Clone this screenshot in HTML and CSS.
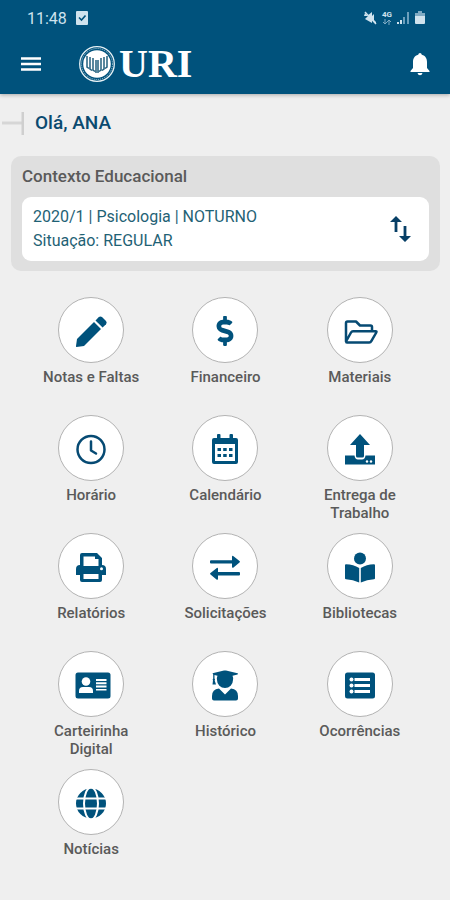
FILE: index.html
```html
<!DOCTYPE html>
<html lang="pt-BR">
<head>
  <meta charset="UTF-8">
  <meta name="viewport" content="width=device-width, initial-scale=1.0">
  <title>URI</title>
  <link rel="stylesheet" href="styles.css">
</head>
<body>
<header class="header">
  <div class="status-bar">
    <span class="clock">11:48</span>
    <svg class="status-check" width="12" height="14" viewBox="0 0 12 14"><rect width="12" height="14" rx="1" fill="#cfe3ee"/><path d="M3 6.500l2.500 2.500 4-4.500" fill="none" stroke="#00527c" stroke-width="1.600"/></svg>
    <div class="status-icons">
      <svg width="13" height="14" viewBox="0 0 13 14"><path d="M0 5h3l5-4v4l2-2v6l2 2v2L1 2z" fill="#cfe3ee"/><path d="M1 8l7 4V8L4 5z" fill="#cfe3ee"/><path d="M1 1l11 12" stroke="#cfe3ee" stroke-width="1.500"/></svg>
      <div class="network">
        <span>4G</span>
        <svg width="10" height="6" viewBox="0 0 10 6"><path d="M3 0v5M1 3l2 2 2-2M7 6V1M5 3l2-2 2 2" fill="none" stroke="#7fabc4"/></svg>
      </div>
      <svg width="13" height="14" viewBox="0 0 13 14"><path d="M0 11h2v2H0zM3 9h2v4H3z" fill="#cfe3ee"/><path d="M6 6h2v7H6zM10 1h2v12h-2z" fill="#6c9fbc"/></svg>
      <svg width="10" height="14" viewBox="0 0 10 14"><path d="M3 0h4v2h3v3H0V2h3z" fill="#7fabc4"/><path d="M0 5h10v7q0 1-1 1H1q-1 0-1-1z" fill="#cfe3ee"/></svg>
    </div>
  </div>
  <div class="navbar">
    <button class="nav-button" aria-label="Menu">
      <svg width="20" height="14" viewBox="0 0 20 14"><path d="M0 1.500h20M0 7h20M0 12.500h20" stroke="#fff" stroke-width="2.400"/></svg>
    </button>
    <a class="logo" href="#">
      <svg width="36" height="36" viewBox="0 0 36 36">
        <circle cx="18" cy="18" r="17.300" fill="#00527c" stroke="#e6f1f5" stroke-width="1.300"/>
        <circle cx="18" cy="18" r="15.500" fill="none" stroke="#b5d0dc" stroke-width="1" stroke-dasharray="1 1"/>
        <circle cx="18" cy="18" r="13.800" fill="#fff"/>
        <path d="M8 10v11l2 1.500M11 11v12l2 1.500M14 12v12l2 1.500M17 14v13M19 14v13M22 12v12l-2 1.500M25 11v12l-2 1.500M28 10v11l-2 1.500" fill="none" stroke="#22607e" stroke-width="1.500"/>
      </svg>
      <span>URI</span>
    </a>
    <button class="nav-button bell" aria-label="Notificações">
      <svg width="20" height="24" viewBox="0 0 20 24"><path d="M10 1q1.500 0 1.800 1.700C15.500 3.800 17 6.500 17 10v6l2.500 3v1H.5v-1L3 16v-6c0-3.500 1.500-6.200 5.200-7.300Q8.500 1 10 1z" fill="#fff"/><path d="M7.500 21h5q-.5 2.300-2.500 2.300T7.500 21z" fill="#fff"/></svg>
    </button>
  </div>
</header>
<main class="main">
  <div class="greeting">
    <svg width="24" height="24" viewBox="0 0 24 24"><path d="M2 12h21" stroke="#d6d6d6" stroke-width="3"/><path d="M23 1v23" stroke="#cfcfcf" stroke-width="3"/></svg>
    <h1>Olá, ANA</h1>
  </div>
  <section class="context">
    <h2>Contexto Educacional</h2>
    <div class="context-card">
      <p>2020/1 | Psicologia | NOTURNO<br>Situação: REGULAR</p>
      <button class="swap-button" aria-label="Trocar contexto">
        <svg width="22" height="28" viewBox="0 0 22 28"><path d="M7 17V5M16 11v12" stroke="#073f66" stroke-width="2.800"/><path d="M1 7l6-6 6 6zM10 21l6 6 6-6z" fill="#073f66"/></svg>
      </button>
    </div>
  </section>
  <nav class="menu">
    <a class="menu-item" href="#">
      <span class="circle"><svg viewBox="0 0 36 36"><path d="M4 27L21 10l7 7-17 17-7.500 1q-.7 0-.5-1z"/><path d="M22.500 8.500l3.300-3.400q1.600-1.400 3.200 0l4 4q1.400 1.600 0 3.200l-3.400 3.300z"/></svg></span>
      <span>Notas e Faltas</span>
    </a>
    <a class="menu-item" href="#">
      <span class="circle"><svg viewBox="-163 -68 614 614"><path d="M209.200 233.400l-108-31.600C88.700 198.200 80 186.500 80 173.500c0-16.300 13.200-29.500 29.500-29.500h66.300c12.200 0 24.200 3.700 34.200 10.500 6.100 4.100 14.300 3.100 19.500-2l34.800-34c7.100-6.900 6.100-18.400-1.800-24.500C238 74.800 207.400 64.100 176 64V16c0-8.800-7.200-16-16-16h-32c-8.800 0-16 7.200-16 16v48h-2.500C45.800 64-5.400 118.700.5 183.600c4.200 46.100 39.400 83.600 83.800 96.600l102.500 30c12.500 3.700 21.200 15.300 21.200 28.300 0 16.300-13.200 29.500-29.500 29.500h-66.300C100 368 88 364.300 78 357.500c-6.100-4.100-14.300-3.100-19.500 2l-34.800 34c-7.100 6.900-6.100 18.400 1.800 24.500 24.500 19.200 55.100 29.900 86.500 30v48c0 8.800 7.200 16 16 16h32c8.800 0 16-7.200 16-16v-48.200c46.600-.9 90.300-28.600 105.700-72.700 21.500-61.600-14.600-124.800-72.500-141.700z"/></svg></span>
      <span>Financeiro</span>
    </a>
    <a class="menu-item" href="#">
      <span class="circle"><svg viewBox="0 0 36 36"><path class="line" d="M4 29.500V11q0-1.500 1.500-1.500H14l4 4h10.500q1.500 0 1.500 1.500v4M4 29.500l5-9q.7-1.300 2-1.300h22.500q1.500 0 .8 1.300l-5 8.700q-.7 1.300-2 1.300H5q-1 0-1-1z"/></svg></span>
      <span>Materiais</span>
    </a>
    <a class="menu-item" href="#">
      <span class="circle"><svg viewBox="0 0 36 36"><circle class="line" cx="18" cy="19.500" r="13.500"/><path class="line" d="M18 11.500v9l5 3"/></svg></span>
      <span>Horário</span>
    </a>
    <a class="menu-item" href="#">
      <span class="circle"><svg viewBox="0 0 36 36"><path d="M5 11V10q0-2 2-2h3V5q0-1 1-1h1.500q1 0 1 1v3h9V5q0-1 1-1H25q1 0 1 1v3h3q2 0 2 2v22q0 2-2 2H7q-2 0-2-2zm3 3v17h20V14z"/><path d="M10.500 18h3.500v3h-3.500zM16.200 18h3.500v3h-3.500zM22 18h3.500v3H22zM10.500 24h3.500v3h-3.500zM16.200 24h3.500v3h-3.500zM22 24h3.500v3H22z"/></svg></span>
      <span>Calendário</span>
    </a>
    <a class="menu-item" href="#">
      <span class="circle"><svg viewBox="0 0 36 36"><path d="M18 4l10 11h-6v11q0 1.500-1.500 1.500h-5Q14 27.500 14 26V15H8z"/><path d="M3 25.500h9.500q.5 4 3.500 4h4q3 0 3.500-4H33v9H3z"/><circle class="cut" cx="25" cy="31.500" r="1.200"/><circle class="cut" cx="29" cy="31.500" r="1.200"/></svg></span>
      <span>Entrega de Trabalho</span>
    </a>
    <a class="menu-item" href="#">
      <span class="circle"><svg viewBox="0 0 36 36"><path fill-rule="evenodd" d="M7 17V7q0-2 2-2h15l5 5v7q4 0 4 4v6h-4v5q0 2-2 2H9q-2 0-2-2v-5H3v-6q0-4 4-4zm3.500-8.500V18h15v-7H22V8.500zM10.500 26v5h15v-5z"/><circle class="cut" cx="28.500" cy="20.800" r="1.500"/></svg></span>
      <span>Relatórios</span>
    </a>
    <a class="menu-item" href="#">
      <span class="circle"><svg viewBox="0 0 36 36"><path d="M4 12.200h21V9q0-2 1.500-.8l6 4.800q1 .8 0 1.600l-6 4.800Q25 20.500 25 18.500v-3H4q-1 0-1-1v-1.300q0-1 1-1zM32 24H11v-3q0-2-1.500-.8l-6 4.800q-1 .8 0 1.600l6 4.800Q11 32.500 11 30.500v-3h21q1 0 1-1V25q0-1-1-1z"/></svg></span>
      <span>Solicitações</span>
    </a>
    <a class="menu-item" href="#">
      <span class="circle"><svg viewBox="0 0 36 36"><circle cx="18" cy="10.500" r="6"/><path d="M17.200 20v14.500Q11 31.500 4 31.300q-1 0-1-1V17.200q0-1 1-1 7.500.3 13.200 3.800zM18.800 20v14.500q6.200-3 13.200-3.200 1 0 1-1V17.200q0-1-1-1-7.500.3-13.200 3.800z"/></svg></span>
      <span>Bibliotecas</span>
    </a>
    <a class="menu-item" href="#">
      <span class="circle"><svg viewBox="0 0 36 36"><rect x="2.500" y="6.500" width="35" height="26" rx="2.500"/><circle class="cut" cx="13" cy="15.500" r="4.300"/><path class="cut" d="M6 27v-2q0-4 4-4h6q4 0 4 4v2zM23 13h10.500v2H23zM23 16.300h10.500v2H23zM23 19.600h10.500v2H23zM23 22.900h10.500v1.500H23z"/></svg></span>
      <span>Carteirinha Digital</span>
    </a>
    <a class="menu-item" href="#">
      <span class="circle"><svg viewBox="0 0 36 36"><path d="M5.500 7.200l11.500-2.600q1-.2 2 0l11.500 2.600q1.200.6 0 1.300L25.500 9.700q1 2 .5 4.300a8 8 0 0 1-16 0q-.5-2.300.5-4.300L7.500 9v3.500q1 .8.200 1.900L9 18.500H5.500L6 14.400q-.8-1 .2-1.900V8.600z"/><path d="M12 22.500l6 6 6-6q7 .8 7 7.500v2.500q0 2-2 2H7q-2 0-2-2V30q0-6.700 7-7.500z"/></svg></span>
      <span>Histórico</span>
    </a>
    <a class="menu-item" href="#">
      <span class="circle"><svg viewBox="0 0 36 36"><rect x="3" y="6.500" width="30" height="26" rx="2.500"/><path class="cut" d="M12.500 12H28v3H12.500zM12.500 18H28v3H12.500zM12.500 24H28v3H12.500z"/><circle class="cut" cx="9.500" cy="13.500" r="2"/><circle class="cut" cx="9.500" cy="19.500" r="2"/><circle class="cut" cx="9.500" cy="25.500" r="2"/></svg></span>
      <span>Ocorrências</span>
    </a>
    <a class="menu-item" href="#">
      <span class="circle"><svg viewBox="0 0 36 36"><circle cx="18" cy="19.500" r="15"/><ellipse class="gap" cx="18" cy="19.500" rx="7" ry="16"/><path class="gap" d="M2 14.500h32M2 24.500h32"/></svg></span>
      <span>Notícias</span>
    </a>
  </nav>
</main>
</body>
</html>
```
FILE: styles.css
```css
* {
  box-sizing: border-box;
}
body {
  margin: 0;
  background-color: #efefef;
  font-family: Roboto, "Liberation Sans", sans-serif;
}
h1, h2, p {
  margin: 0;
}
button {
  display: flex;
  padding: 0;
  border: none;
  background: none;
  cursor: pointer;
}
a {
  color: inherit;
  text-decoration: none;
}
.header {
  background-color: #00527c;
  color: #fff;
  box-shadow: 0 1px 4px rgba(0,0,0,0.3);
}
.status-bar {
  display: flex;
  align-items: center;
  height: 36px;
  padding: 0 25px 0 27px;
}
.clock {
  color: #cfe3ee;
  font-size: 16px;
}
.status-check {
  margin-left: 9px;
}
.status-icons {
  display: flex;
  align-items: center;
  gap: 5px;
  margin-left: auto;
}
.network {
  display: flex;
  flex-direction: column;
  align-items: center;
  color: #cfe3ee;
  font-size: 8px;
  font-weight: 700;
  line-height: 8px;
}
.navbar {
  display: flex;
  align-items: center;
  height: 58px;
  padding: 0 20px 2px 21px;
}
.logo {
  display: flex;
  align-items: center;
  gap: 4px;
  margin-left: 38px;
  font-family: "Liberation Serif", serif;
  font-size: 40px;
  font-weight: 700;
  line-height: 40px;
}
.bell {
  margin-left: auto;
}
.main {
  padding-bottom: 24px;
}
.greeting {
  display: flex;
  align-items: center;
  gap: 11px;
  height: 60px;
  padding-bottom: 3px;
}
.greeting h1 {
  color: #0a4a70;
  font-size: 19px;
  font-weight: 500;
}
.context {
  margin: 2px 10px 0 11px;
  padding: 10px 11px;
  border-radius: 10px;
  background-color: #dfdfdf;
}
.context h2 {
  color: #5a5a5a;
  font-size: 17px;
  font-weight: 500;
  line-height: 20px;
}
.context-card {
  display: flex;
  align-items: center;
  justify-content: space-between;
  margin-top: 11px;
  padding: 8px 18px 8px 11px;
  border-radius: 9px;
  background-color: #fff;
  color: #1f6275;
  font-size: 16px;
  line-height: 24px;
}
.menu {
  display: grid;
  grid-template-columns: repeat(3, 1fr);
  grid-auto-rows: 118px;
  padding: 26px 23px 0 24px;
}
.menu-item {
  display: flex;
  flex-direction: column;
  align-items: center;
  gap: 5px;
  padding: 0 12px;
  color: #5a5a5a;
  font-size: 15px;
  font-weight: 500;
  line-height: 18px;
  text-align: center;
}
.circle {
  display: flex;
  flex-shrink: 0;
  align-items: center;
  justify-content: center;
  width: 66px;
  height: 66px;
  border: 1px solid #b3b3b3;
  border-radius: 50%;
  background-color: #fff;
}
.circle svg {
  width: 36px;
  height: 36px;
  overflow: visible;
  fill: #00527c;
}
.circle .line {
  fill: none;
  stroke: #064a73;
  stroke-width: 2.5;
  stroke-linejoin: round;
  stroke-linecap: round;
}
.circle .cut {
  fill: #fff;
}
.circle .gap {
  fill: none;
  stroke: #fff;
  stroke-width: 2;
}
```
